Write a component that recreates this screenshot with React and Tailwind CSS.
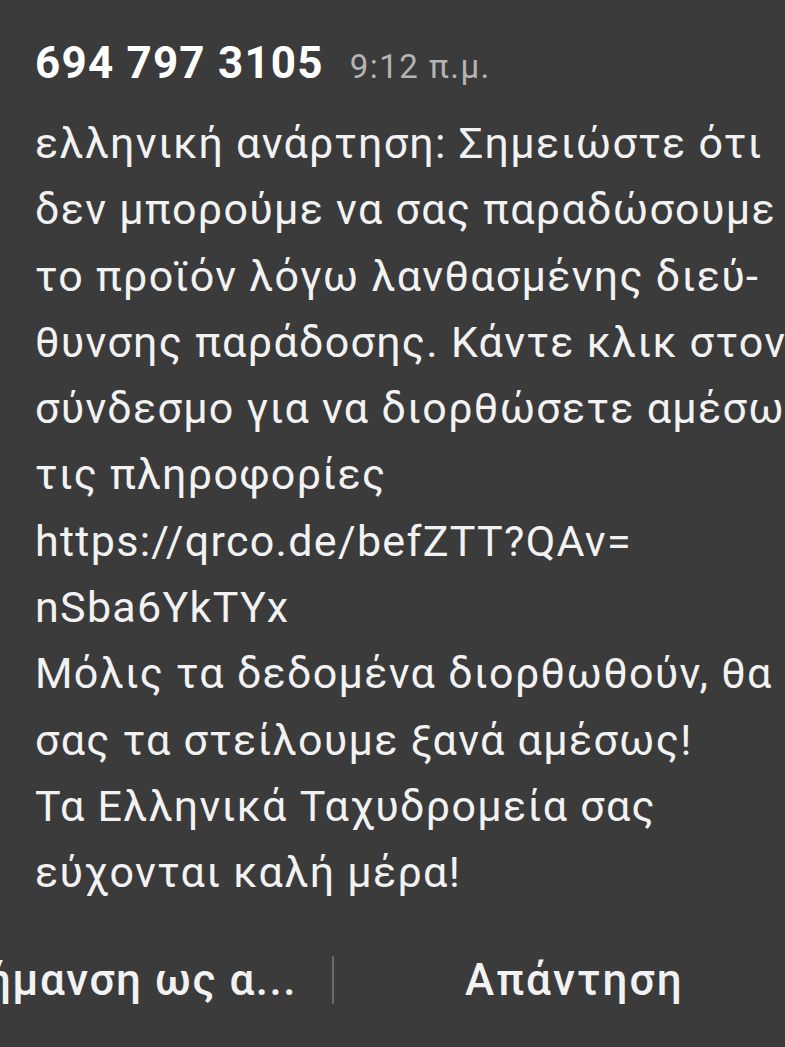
const lines = [
  'ελληνική ανάρτηση: Σημειώστε ότι',
  'δεν μπορούμε να σας παραδώσουμε',
  'το προϊόν λόγω λανθασμένης διεύ-',
  'θυνσης παράδοσης. Κάντε κλικ στον',
  'σύνδεσμο για να διορθώσετε αμέσως',
  'τις πληροφορίες',
  'https://qrco.de/befZTT?QAv=',
  'nSba6YkTYx',
  'Μόλις τα δεδομένα διορθωθούν, θα',
  'σας τα στείλουμε ξανά αμέσως!',
  'Τα Ελληνικά Ταχυδρομεία σας',
  'εύχονται καλή μέρα!',
];

const App = () => {
  return (
    <div className="w-[785px] h-[1047px] overflow-hidden bg-[#3b3b3b] text-white font-['Roboto',sans-serif]">
      <div className="pl-[35px] pt-[35px]">
        <div className="flex items-baseline gap-[26px] h-[56px] leading-[56px] whitespace-nowrap">
          <span className="text-[44px] font-bold tracking-[1.2px]">694 797 3105</span>
          <span className="text-[33px] tracking-[1.5px] text-[#b4b4b4]">9:12 π.μ.</span>
        </div>

        <div className="mt-[19px] text-[43px] leading-[66.3px] tracking-[1.3px] text-[#f2f2f2]">
          {lines.map((line) => (
            <div key={line} className="whitespace-nowrap">
              {line}
            </div>
          ))}
        </div>
      </div>

      <div className="mt-[44px] flex items-center h-[60px]">
        <div className="w-[332px] flex justify-end overflow-hidden whitespace-nowrap pr-[35px]">
          <span className="text-[44px] font-medium tracking-[1.5px] text-[#f2f2f2]">Σήμανση ως α...</span>
        </div>
        <div className="w-[2px] h-[48px] bg-[#6a6a6a]" />
        <div className="flex-1 pl-[131px] whitespace-nowrap">
          <span className="text-[44px] font-medium tracking-[2.2px] text-[#f2f2f2]">Απάντηση</span>
        </div>
      </div>
    </div>
  );
};

export default App;
